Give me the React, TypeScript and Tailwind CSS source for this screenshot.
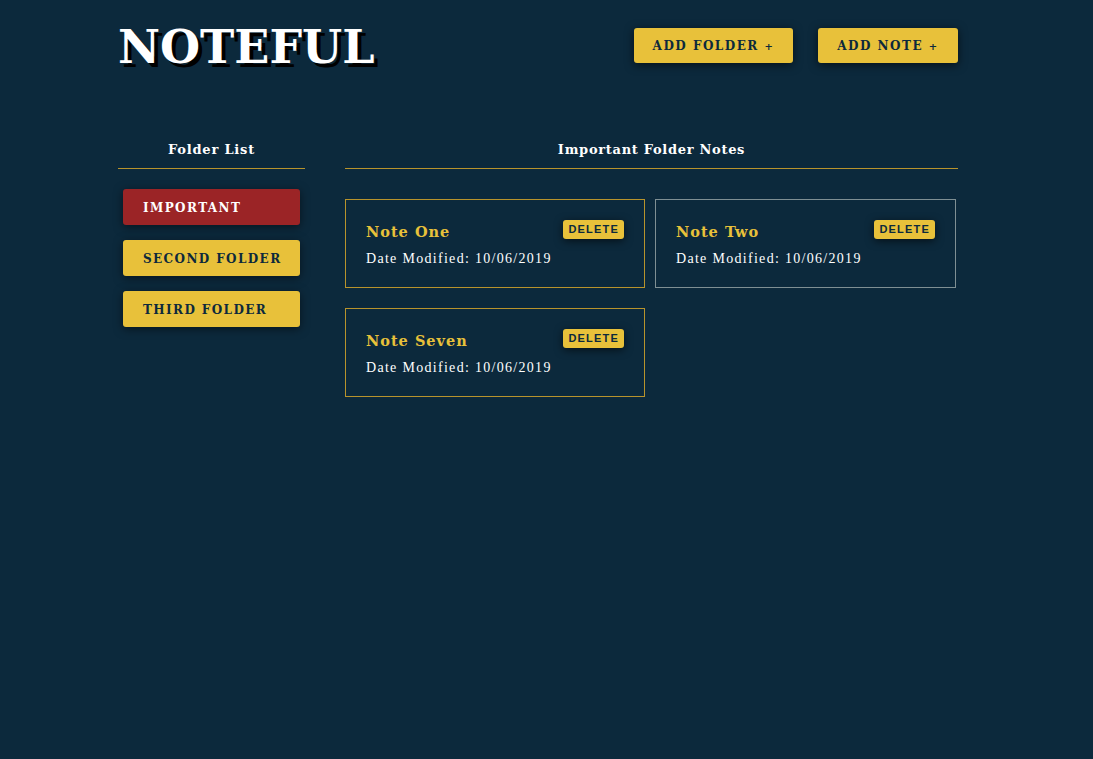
const folders = [
  { name: "IMPORTANT", active: true },
  { name: "SECOND FOLDER", active: false },
  { name: "THIRD FOLDER", active: false },
];

const notes = [
  { title: "Note One", date: "10/06/2019", hover: false },
  { title: "Note Two", date: "10/06/2019", hover: true },
  { title: "Note Seven", date: "10/06/2019", hover: false },
];

const serif = "font-['DejaVu_Serif','Liberation_Serif',serif]";

const NoteCard = ({ title, date, hover }: { title: string; date: string; hover: boolean }) => {
  return (
    <div
      className={
        hover
          ? "h-[89px] border border-[#7f8f93] px-5 pt-5 flex justify-between"
          : "h-[89px] border border-[#b8932c] px-5 pt-5 flex justify-between"
      }
    >
      <div>
        <h3 className={`${serif} text-[14.5px] font-bold tracking-[1px] text-[#e8c13a] leading-[22px] mt-[1px]`}>
          {title}
        </h3>
        <p className="font-['Liberation_Serif',serif] text-[14px] tracking-[1.3px] text-white mt-[5px]">
          Date Modified: {date}
        </p>
      </div>
      <button className="h-[19px] px-[5px] bg-[#e8c13a] rounded-[3px] shadow-[0_2px_8px_rgba(0,0,0,0.6)] font-['Liberation_Sans',sans-serif] font-bold text-[11px] tracking-[1.2px] text-[#0c293c] leading-none">
        DELETE
      </button>
    </div>
  );
};

const App = () => {
  return (
    <div className="min-h-[759px] w-full bg-[#0c293c]">
      <div className="w-[840px] ml-[118px] pt-[24px]">
        <header className="flex justify-between items-start">
          <h1
            className={`${serif} text-[46px] font-bold tracking-[0px] text-white leading-none [text-shadow:4px_4px_0_#000]`}
          >
            NOTEFUL
          </h1>
          <div className="flex gap-[25px] mt-[4px]">
            <button className={`${serif} h-[35px] w-[159px] bg-[#e8c13a] rounded-[3px] shadow-[0_2px_10px_rgba(0,0,0,0.6)] text-[12px] font-bold tracking-[1.5px] text-[#0c293c]`}>
              ADD FOLDER <span className="text-[10px]">+</span>
            </button>
            <button className={`${serif} h-[35px] w-[140px] bg-[#e8c13a] rounded-[3px] shadow-[0_2px_10px_rgba(0,0,0,0.6)] text-[12px] font-bold tracking-[1.5px] text-[#0c293c]`}>
              ADD NOTE <span className="text-[10px]">+</span>
            </button>
          </div>
        </header>

        <div className="flex gap-[40px] mt-[70px]">
          <aside className="w-[187px]">
            <h2 className={`${serif} text-[13px] font-bold tracking-[0.8px] text-white text-center pb-[8px] border-b border-[#b8932c]`}>
              Folder List
            </h2>
            <ul className="flex flex-col gap-[15px] mt-[20px] px-[5px]">
              {folders.map((f) => (
                <li
                  key={f.name}
                  className={
                    f.active
                      ? `${serif} h-[36px] flex items-center pl-[20px] pt-[2px] rounded-[3px] bg-[#9b2426] text-white text-[12px] font-bold tracking-[1.4px] shadow-[0_2px_10px_rgba(0,0,0,0.5)]`
                      : `${serif} h-[36px] flex items-center pl-[20px] pt-[2px] rounded-[3px] bg-[#e8c13a] text-[#0c293c] text-[12px] font-bold tracking-[1.4px] shadow-[0_2px_10px_rgba(0,0,0,0.5)]`
                  }
                >
                  {f.name}
                </li>
              ))}
            </ul>
          </aside>

          <main className="w-[613px]">
            <h2 className={`${serif} text-[13px] font-bold tracking-[0.7px] text-white text-center pb-[8px] border-b border-[#b8932c]`}>
              Important Folder Notes
            </h2>
            <div className="grid grid-cols-[300px_301px] gap-x-[10px] gap-y-[20px] mt-[30px]">
              {notes.map((n) => (
                <NoteCard key={n.title} {...n} />
              ))}
            </div>
          </main>
        </div>
      </div>
    </div>
  );
};

export default App;
